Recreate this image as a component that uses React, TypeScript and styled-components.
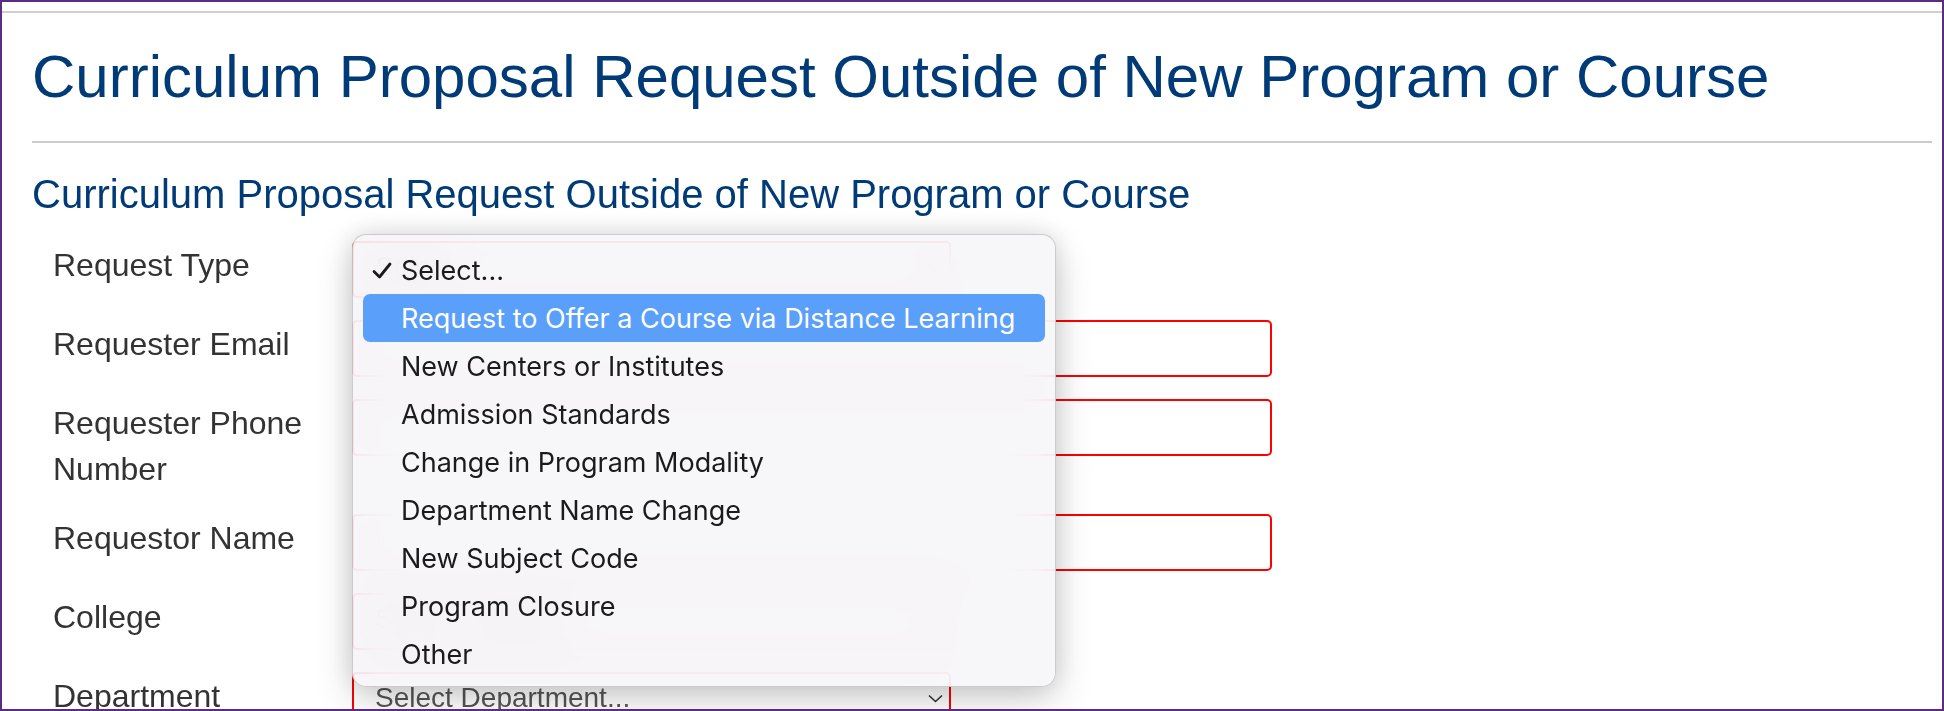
import styled, { createGlobalStyle } from "styled-components";

const GlobalStyle = createGlobalStyle`
  html, body {
    margin: 0;
    padding: 0;
    background: #fff;
  }
  body {
    font-family: "Liberation Sans", Arial, sans-serif;
  }
`;

const Frame = styled.div`
  box-sizing: border-box;
  width: 1944px;
  height: 711px;
  border: 2px solid #5a2d82;
  overflow: hidden;
  background: #fff;
`;

const TopRule = styled.div`
  margin-top: 9px;
  height: 2px;
  background: #cfcfcf;
`;

const Content = styled.main`
  padding: 0 10px 0 30px;
`;

const PageTitle = styled.h1`
  margin: 31px 0 0;
  font-size: 60px;
  line-height: 66px;
  font-weight: 400;
  color: #003b77;
`;

const Divider = styled.hr`
  margin: 31px 0 0;
  border: 0;
  height: 2px;
  background: #cccccc;
`;

const SectionTitle = styled.h2`
  margin: 29px 0 0;
  font-size: 40px;
  line-height: 44px;
  font-weight: 400;
  color: #003b77;
`;

const Form = styled.form`
  margin-top: 25px;
  display: flex;
  flex-direction: column;
  gap: 22px;
`;

const FieldRow = styled.div`
  display: flex;
  align-items: flex-start;
`;

const Label = styled.label`
  box-sizing: border-box;
  flex: 0 0 320px;
  padding: 1px 12px 0 21px;
  font-size: 32px;
  line-height: 46px;
  color: #333;
`;

const Control = styled.div`
  position: relative;
  flex: 1;
`;

const TextInput = styled.input`
  box-sizing: border-box;
  display: block;
  width: 920px;
  height: 57px;
  border: 2px solid #ff0000;
  border-radius: 5px;
  background: #fff;
  outline: none;
  font: inherit;
`;

const SelectBox = styled.div`
  box-sizing: border-box;
  width: 599px;
  height: 57px;
  border: 2px solid #ff0000;
  border-radius: 5px;
  background: #fff;
  display: flex;
  align-items: center;
  justify-content: space-between;
  padding: 0 6px 5px 21px;
  font-size: 28px;
  color: #555;
`;

const Menu = styled.ul`
  position: absolute;
  top: -7px;
  left: 0;
  z-index: 5;
  box-sizing: border-box;
  width: 704px;
  margin: 0;
  padding: 11px 10px 8px;
  list-style: none;
  border-radius: 14px;
  border: 1px solid rgba(0, 0, 0, 0.18);
  background: rgba(246, 246, 249, 0.86);
  backdrop-filter: blur(22px) saturate(1.6);
  box-shadow: 0 0 26px rgba(0, 0, 0, 0.13), 0 14px 38px rgba(0, 0, 0, 0.17);
  font-family: Inter, "Noto Sans", sans-serif;
`;

const MenuItem = styled.li<{ $active?: boolean }>`
  position: relative;
  display: flex;
  align-items: center;
  height: 48px;
  padding-left: 38px;
  border-radius: 7px;
  font-size: 27px;
  color: ${(p) => (p.$active ? "#fff" : "#1b1b1b")};
  background: ${(p) => (p.$active ? "#5aa0fb" : "transparent")};
`;

const CheckMark = styled.svg`
  position: absolute;
  left: 9px;
  top: 16px;
`;

const Chevron = () => (
  <svg width="15" height="9" viewBox="0 0 15 9" fill="none">
    <path d="M1 1.5 L7.5 7.5 L14 1.5" stroke="#333" strokeWidth="1.6" />
  </svg>
);

const options = [
  "Select...",
  "Request to Offer a Course via Distance Learning",
  "New Centers or Institutes",
  "Admission Standards",
  "Change in Program Modality",
  "Department Name Change",
  "New Subject Code",
  "Program Closure",
  "Other",
];

const App = () => {
  return (
    <>
      <GlobalStyle />
      <Frame>
        <TopRule />
        <Content>
          <PageTitle>Curriculum Proposal Request Outside of New Program or Course</PageTitle>
          <Divider />
          <SectionTitle>Curriculum Proposal Request Outside of New Program or Course</SectionTitle>
          <Form>
            <FieldRow>
              <Label>Request Type</Label>
              <Control>
                <SelectBox>
                  <span>Select...</span>
                  <Chevron />
                </SelectBox>
                <Menu>
                  {options.map((o, i) => (
                    <MenuItem key={o} $active={i === 1}>
                      {i === 0 && (
                        <CheckMark width="20" height="17" viewBox="0 0 20 17" fill="none">
                          <path
                            d="M2 9.5 L7.5 15 L18 2"
                            stroke="#1b1b1b"
                            strokeWidth="2.8"
                            strokeLinecap="round"
                            strokeLinejoin="round"
                          />
                        </CheckMark>
                      )}
                      {o}
                    </MenuItem>
                  ))}
                </Menu>
              </Control>
            </FieldRow>
            <FieldRow>
              <Label>Requester Email</Label>
              <Control>
                <TextInput type="text" />
              </Control>
            </FieldRow>
            <FieldRow>
              <Label>Requester Phone Number</Label>
              <Control>
                <TextInput type="text" />
              </Control>
            </FieldRow>
            <FieldRow>
              <Label>Requestor Name</Label>
              <Control>
                <TextInput type="text" />
              </Control>
            </FieldRow>
            <FieldRow>
              <Label>College</Label>
              <Control>
                <SelectBox>
                  <span>Select College...</span>
                  <Chevron />
                </SelectBox>
              </Control>
            </FieldRow>
            <FieldRow>
              <Label>Department</Label>
              <Control>
                <SelectBox>
                  <span>Select Department...</span>
                  <Chevron />
                </SelectBox>
              </Control>
            </FieldRow>
          </Form>
        </Content>
      </Frame>
    </>
  );
};

export default App;
